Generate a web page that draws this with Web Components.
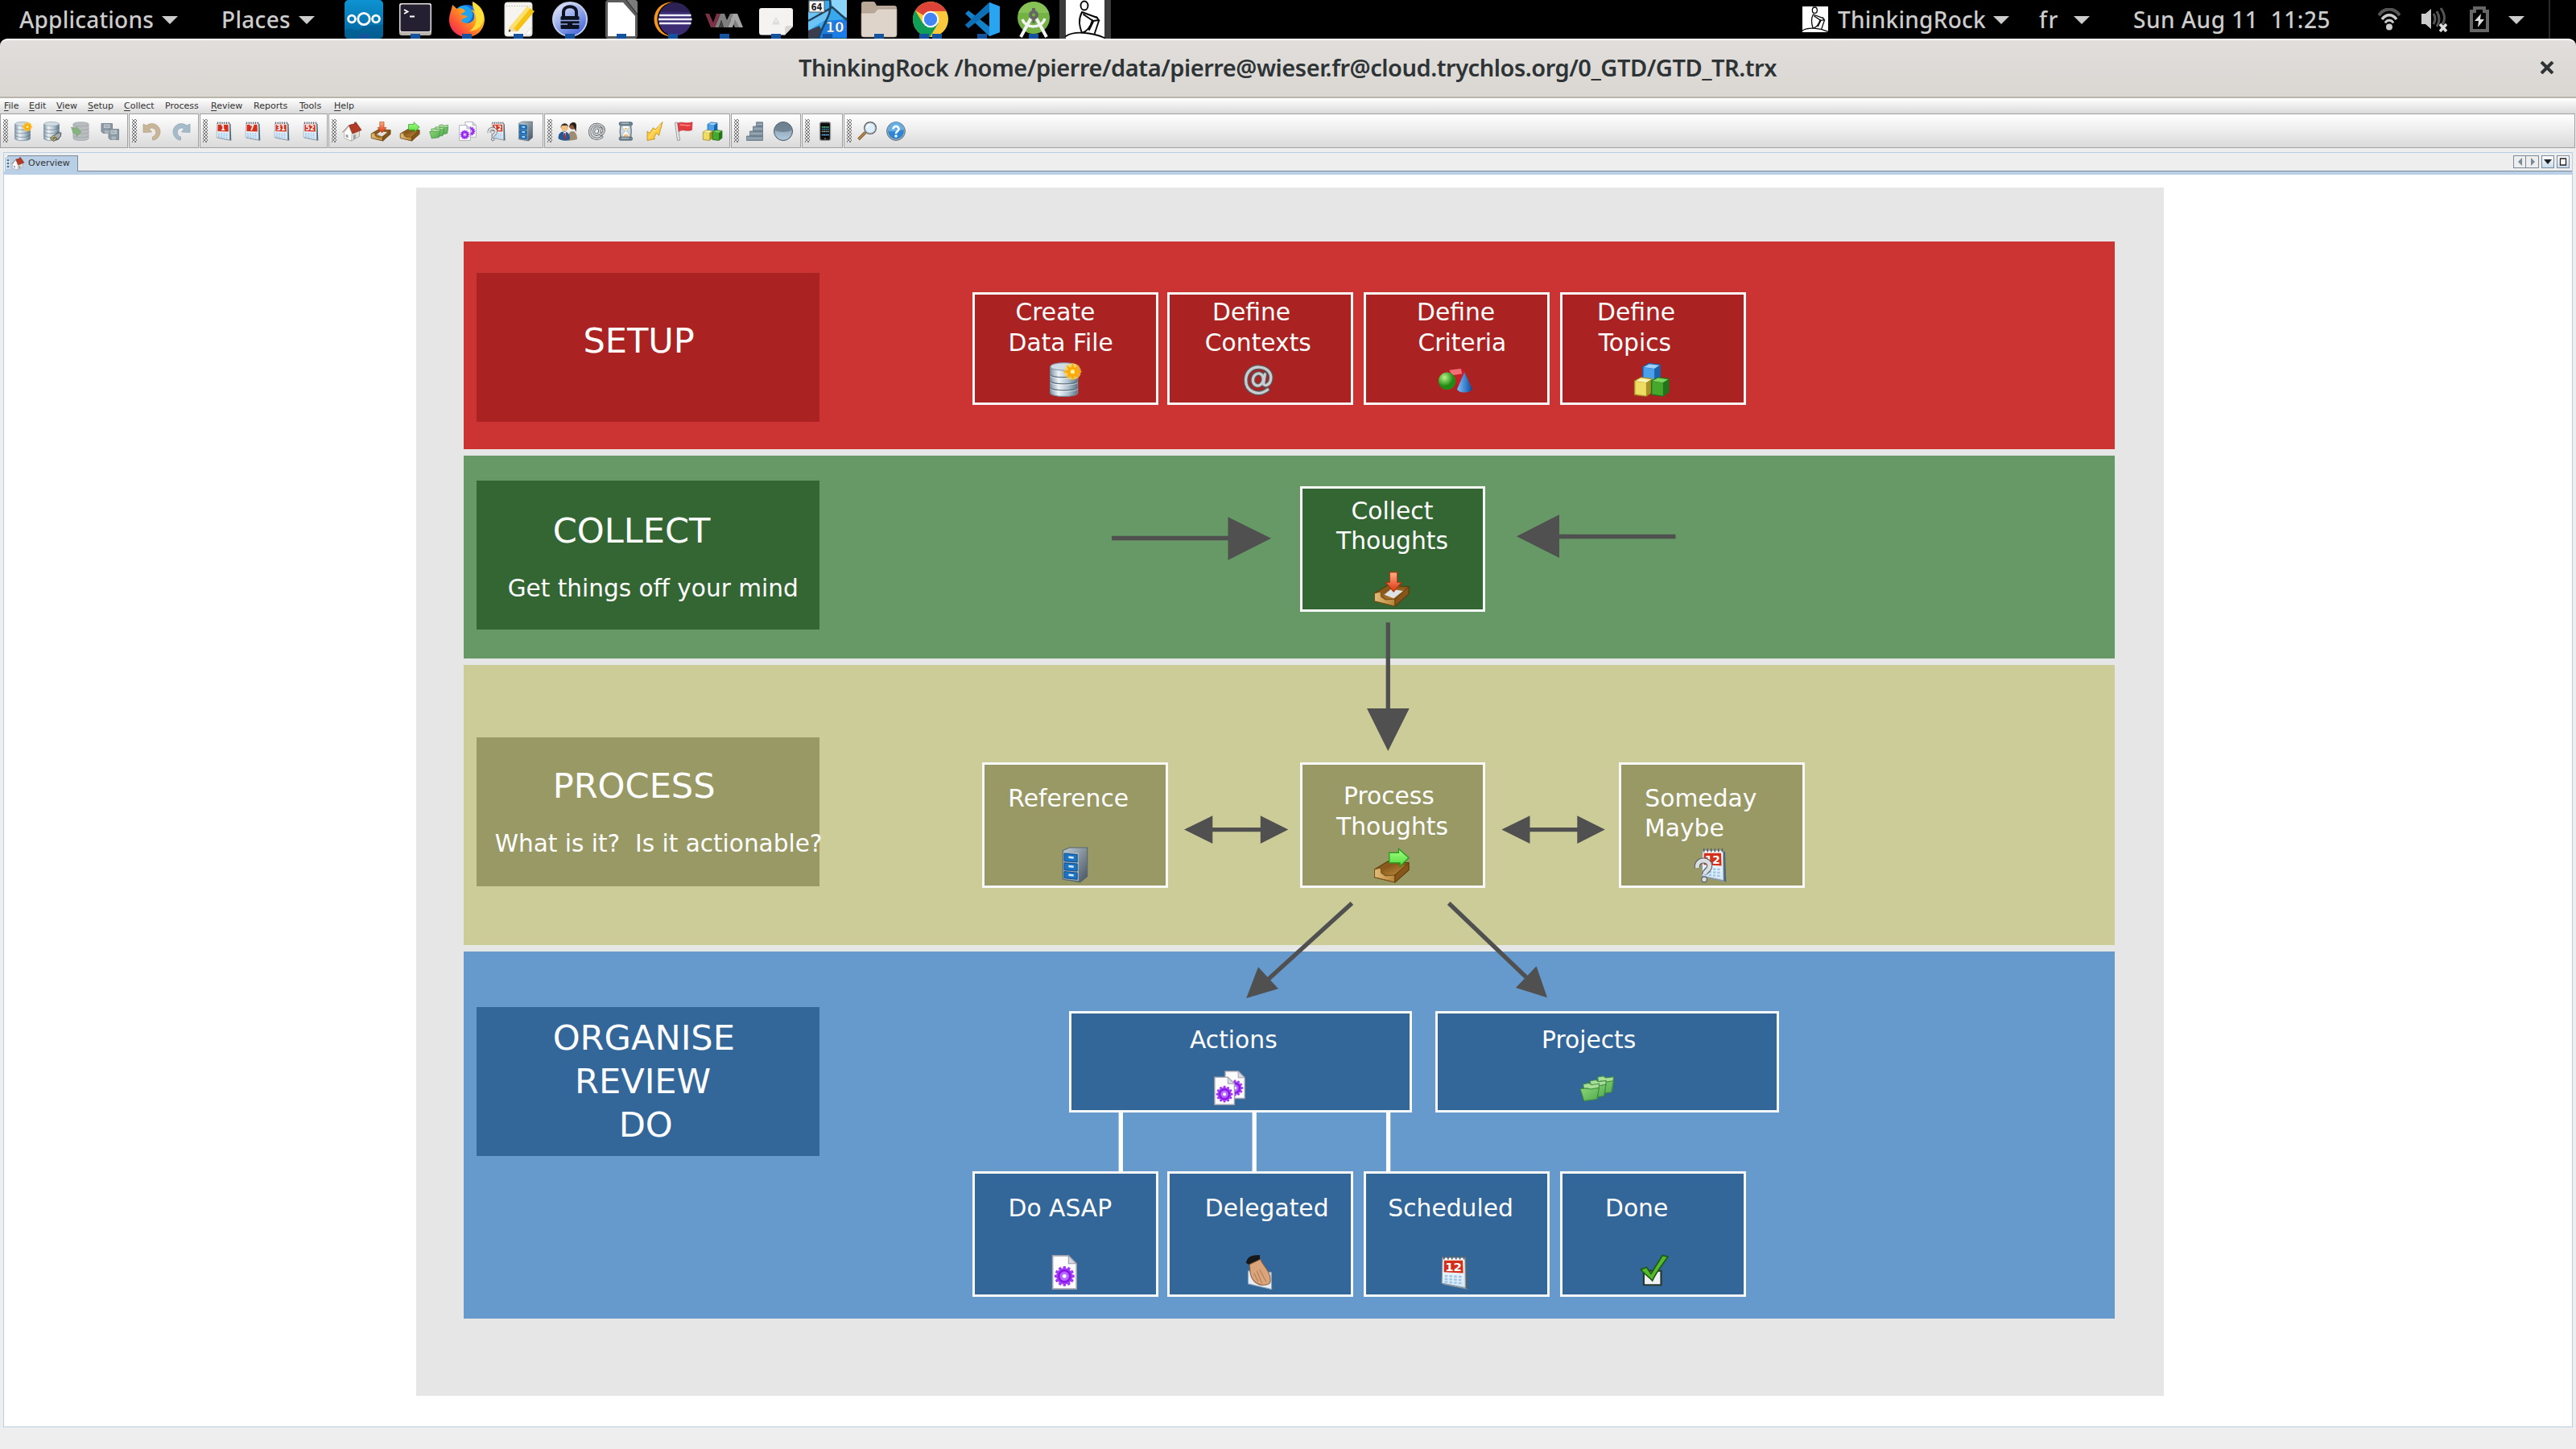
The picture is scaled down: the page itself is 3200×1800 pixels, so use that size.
<!DOCTYPE html>
<html lang="en">
<head>
<meta charset="utf-8">
<title>ThinkingRock</title>
<style>
html,body{margin:0;padding:0;background:#eee}
body{width:3200px;height:1800px;overflow:hidden;font-family:"DejaVu Sans",sans-serif}
</style>
</head>
<body>
<rock-desktop></rock-desktop>
<script>
const GRAD = (id, a, b, x2 = 0, y2 = 1) => `<linearGradient id="${id}" x1="0" y1="0" x2="${x2}" y2="${y2}"><stop offset="0" stop-color="${a}"/><stop offset="1" stop-color="${b}"/></linearGradient>`;

const DB = `<defs><linearGradient id="d"><stop offset="0" stop-color="#8095a5"/><stop offset=".3" stop-color="#eef3f7"/><stop offset=".65" stop-color="#b0c1ce"/><stop offset="1" stop-color="#5a7283"/></linearGradient></defs>
<path d="M1.500 3.200V21c0 3.600 19 3.600 19 0V3.200z" fill="url(#d)" stroke="#74899a" stroke-width=".7"/>
<path d="M1.500 8.500c0 2.600 19 2.600 19 0M1.500 13c0 2.600 19 2.600 19 0M1.500 17.500c0 2.600 19 2.600 19 0" fill="none" stroke="#5d7382" stroke-width=".7"/>
<path d="M1.500 9.300c0 2.600 19 2.600 19 0M1.500 13.800c0 2.600 19 2.600 19 0M1.500 18.300c0 2.600 19 2.600 19 0" fill="none" stroke="#fff" stroke-width=".5" opacity=".6"/>
<ellipse cx="11" cy="3" rx="9.300" ry="2.600" fill="#d0dbe3" stroke="#8498a6" stroke-width=".6"/>`;
const TRAY = `<defs>${GRAD('w', '#74470f', '#c08c3e', 1, 1)}${GRAD('w2', '#e2bd7a', '#b78436', 1, 0)}</defs>
<path d="M.3 15 9.500 9.500 24 10.500 24 15.500 14.500 24 .3 20.500z" fill="#8a5a1a" stroke="#5b390c" stroke-width=".6"/>
<path d="M4 15.800 10.500 11.500 22 12.300 14 18.800 8 18.800z" fill="url(#w)"/>
<path d="M.3 15 4.500 14 5 17.500 8 19.500 14.500 19 14.500 24 .3 20.500z" fill="url(#w2)" stroke="#7a5118" stroke-width=".6"/>
<path d="M14.500 19 24 10.500V15.500L14.500 24z" fill="#86561a" stroke="#5b390c" stroke-width=".5"/>`;
const CAL = (n, s) => `<defs>${GRAD('c', '#ffffff', '#d3e6f5')}</defs>
<path d="M19.500 2 21.500 3 22.300 23.800 19.500 22.500z" fill="#4c6478"/><path d="M4 19.500 19.500 22.500 22.300 24 5.500 20.700z" fill="#8496a3"/><path d="M4.500 1.800H20L20.300 22.700 4 19.500z" fill="url(#c)" stroke="#8c9ba6" stroke-width=".6"/>
<path d="M5.500 3.800H18.500L18.800 12.500 5.400 11.900z" fill="#d3301c"/>
<path d="M5.500 .5v2.500M8.300 .5v2.500M11 .5v2.500M13.800 .5v2.500M16.500 .5v2.500M19.300 .5v2.500" stroke="#5b6064" stroke-width="1"/>
<text x="12" y="11" text-anchor="middle" font-family="DejaVu Sans,sans-serif" font-weight="bold" font-size="${s}" fill="#fff">${n}</text>
<path d="M6 14.500l12 .6M6 16.600l12 .8M6 18.500l12 1.200" stroke="#9cc6e8" stroke-width="1.300" stroke-dasharray="2 1.200"/>`;
const TEETH = Array.from({ length: 12 }, (_, i) => { const p = (a, r) => { const t = (i * 30 + a) * Math.PI / 180; return (8.7 + r * Math.cos(t)).toFixed(2) + ' ' + (14.7 + r * Math.sin(t)).toFixed(2); }; return `${i ? 'L' : 'M'}${p(-12, 5.5)}L${p(-7, 7)}L${p(7, 7)}L${p(12, 5.5)}`; }).join('') + 'z';
const GEARPAGE = (x, y, s) => `<g transform="translate(${x} ${y}) scale(${s})"><path d="M.5.5H11.500L17 6V23.500H.5z" fill="#fdfdff" stroke="#a0a0ac" stroke-width=".9"/><path d="M11.500 .5V6H17z" fill="#d5d8de" stroke="#9c9ca8" stroke-width=".6"/>
<path d="${TEETH}" fill="#a23af8"/><circle cx="8.700" cy="14.700" r="4" fill="none" stroke="#8210e0" stroke-width="1"/><circle cx="8.700" cy="14.700" r="3" fill="#b76cff"/><circle cx="8.700" cy="14.700" r="1.300" fill="#fff"/></g>`;
const FOLDER = (x, y) => `<g transform="translate(${x} ${y})"><path d="M2.500 1.500 6.500 .8 8 2 13.500 1.300 12.500 11 3.500 12z" fill="#a9dd98" stroke="#3f8f45" stroke-width=".6"/><path d="M.4 4.800 5 4.400 7.500 5 13.500 4 12 12 3 13.200z" fill="url(#f)" stroke="#3d8a41" stroke-width=".6"/></g>`;
const CUBE = (x, y, t, l, r) => `<g transform="translate(${x} ${y})"><path d="M0 2.500 4.500 0 12 1 12 10 8 13 0 12z" fill="${r}" stroke="${r}" stroke-width=".7"/><path d="M.5 2.700 8 3.800V12.600L.5 11.600z" fill="${l}"/><path d="M.5 2.500 4.500.4 11.500 1.300 8 3.600z" fill="${t}"/></g>`;
const THINKER = `<rect width="48" height="48" fill="#fff"/><g fill="none" stroke="#050505" stroke-width="1.900" stroke-linecap="round"><ellipse cx="23" cy="7" rx="4.500" ry="5.500"/><path d="M20 15C15 25 17 33 20 41M20 15 39 22M22 18 34 26 41 25 38 21M20 41C27 39 31 32 33 25M29 37 34 27M36 41 41 26M0 45C10 38 32 40 48 47"/></g>`;

const ICONS = {
  dbNew: DB + `<g fill="#ffa800"><circle cx="17" cy="6.500" r="5.800" fill="#ffcf4a" opacity=".75"/><path d="M17 .5l1.200 3.500 3-2-1.300 3.400 4 1.100-4 1.200 1.400 3.300-3-1.900-1.300 3.400-1.300-3.400-3 1.900 1.400-3.300-4-1.200 4-1.100-1.300-3.400 3 2z"/><circle cx="17" cy="6.500" r="1.500" fill="#fff0a8"/></g>`,
  dbLink: DB + `<path d="M12 19 19 14 23 14 22 19 17 23z" fill="#a7adb0" stroke="#4e5558"/><path d="M10 22l4-4M13 24l4-4" stroke="#403c20" stroke-width="2.500"/><path d="M10.500 21.500l3.500-3.500M13.500 23.500l3-3" stroke="#eee27a" stroke-width="1.100"/>`,
  dbBack: `<path d="M2 3V21c0 3.400 19 3.400 19 0V3c0-3-19-3-19 0z" fill="#b9bdc0" stroke="#a3a8ab" stroke-width=".8"/><path d="M2 3.500c0 3 19 3 19 0M2 8.500c0 3 19 3 19 0M2 13c0 3 19 3 19 0M2 17.500c0 3 19 3 19 0" fill="none" stroke="#9da3a7" stroke-width=".8"/><path d="M-.5 7 4 8.500 6 6.500 12 13 6 18.500 6 15.500 2 14.500z" fill="#86b47f" stroke="#73a06d" stroke-width=".6"/>`,
  saveAll: `<g fill="#8b99a4" stroke="#7c8a95"><path d="M1 2.500H14.500V14.500H3L1 12.500z"/><path d="M10 9.500H22.500V22.500H12L10 20.500z"/></g><path d="M4 3.500h7.500v4.500H4zM12.500 10.500h7.500v5h-7.500z" fill="#c3cbd1"/><path d="M5 11h5.500v3.500H5zM13.500 18.500h5.500v4h-5.500z" fill="#abb6be"/><path d="M5 5h5.500M5 6.500h5.500M13.500 12h5M13.500 13.500h5" stroke="#8997a1" stroke-width=".7"/>`,
  undo: `<path d="M1 3 5 5C11 0 21 3 22 12 22 18 18 23 12.500 23V19C16 18 17 15 16.500 12 15.500 8 11 7 8.500 9L11.500 13 1 13.500z" fill="#c9b598" stroke="#b8a487" stroke-width=".8"/>`,
  redo: `<path d="M23 3 19 5C13 0 3 3 2 12 2 18 6 23 11.500 23V19C8 18 7 15 7.500 12 8.500 8 13 7 15.500 9L12.500 13 23 13.500z" fill="#a6bbc9" stroke="#93a9b8" stroke-width=".8"/>`,
  cal1: CAL('1', 8), cal7: CAL('7', 8), cal31: CAL('31', 8), cal52: CAL('52', 8), cal12: CAL('12', 8.3),
  home: `<path d="M3 13 3 20.500 11.500 24 21.500 18.500V10L9 6z" fill="#e4ddd2" stroke="#8b847e" stroke-width=".6"/><path d="M2.500 13.500 8.500 5.500 12 14.500 11.500 24 2.500 20.500z" fill="#fffdf9" stroke="#9a938c" stroke-width=".5"/><path d="M15 .5h3v5h-3z" fill="#8a6a60"/><path d="M8.500 4.500 18 2 24 10.500 13 15z" fill="#b23a26" stroke="#6e2015" stroke-width=".6"/><path d="M8.500 4.500 .5 13.500" stroke="#8d6b60" stroke-width="1"/><path d="M4.500 16l3 .8v3.500l-3-1zM14 17l2.800-1.300v5l-2.800 1.500z" fill="#8f9db0"/>`,
  collect: TRAY + `<path d="M7 16 12 12 20 13.500 13.500 18.500z" fill="#dfe2e5"/><path d="M10.800 .5H16V7.500H19L13.500 14 8 7.500H10.800z" fill="url(#r)" stroke="#a8380c" stroke-width=".6"/><defs>${GRAD('r', '#ffb088', '#d8320f')}</defs>`,
  process: TRAY + `<path d="M10.500 3.500H17V.8L24 7 18 13V10.500H10.500z" fill="url(#g)" stroke="#239a1f" stroke-width=".7"/><defs>${GRAD('g', '#a6ff84', '#4fdc3c')}</defs>`,
  projects: `<defs>${GRAD('f', '#8cd678', '#52ab50', 1, 1)}</defs>` + FOLDER(10.2, 3) + FOLDER(5, 5.6) + FOLDER(.2, 7.800),
  actions: GEARPAGE(8.5, 0, .82) + GEARPAGE(1.2, 4.1, .83),
  action: GEARPAGE(3.2, 0, 1),
  someday: `<g transform="translate(2 0) scale(.92 1)">${CAL('12', 8.3)}</g><path d="M2.500 14C1.500 7.500 11 7.500 11 12.500 11 16 7.500 16 7.500 18.500" fill="none" stroke="#5e6467" stroke-width="4"/><path d="M2.500 14C1.500 7.500 11 7.500 11 12.500 11 16 7.500 16 7.500 18.500" fill="none" stroke="#dbdee0" stroke-width="2.700"/><circle cx="7.300" cy="22" r="1.900" fill="#d5d9db" stroke="#5e6467" stroke-width=".7"/>`,
  reference: `<defs>${GRAD('k', '#c3ced6', '#42525f', 1, 1)}</defs><path d="M3.500 2 8 0H20.500V20L15.500 24 3.500 22z" fill="url(#k)" stroke="#566673" stroke-width=".6"/><path d="M4 2.500 14.500 3.500V23L4 21.500z" fill="#9fb5c4"/><path d="M4.500 4 13.500 4.800V10L4.500 9.300zM4.500 10.500 13.500 11.200V16.200L4.500 15.500zM4.500 16.500 13.500 17.400V22L4.500 21z" fill="#1b74c4" stroke="#0f4680" stroke-width=".5"/><path d="M7.500 6.500l3.500.5M7.500 12.800l3.500.5M7.500 18.800l3.500.5" stroke="#d9ecfb" stroke-width="1.400"/>`,
  people: `<path d="M12 24C12 15 15 12 18 12S24 15 24 22L20 23z" fill="#a08c72"/><circle cx="18.500" cy="5.800" r="4" fill="#8a5a3a"/><path d="M14.500 8C13 0 24-2 23 6L22.500 13 20 7 18 4 15.500 5z" fill="#2e211b"/><path d="M.5 21C.5 14 4 12.500 8 12.500S15 15 15 22C11 25 4 24 .5 21z" fill="#235a96"/><path d="M7 13h3l-1 8z" fill="#fff"/><path d="M8 14h1.300l.5 7-1.300 2-1-2z" fill="#c8201a"/><circle cx="8.300" cy="7.500" r="4.500" fill="#f0bd82"/><path d="M3.700 8C3 1 13 0 13 7L11.500 5 5 5z" fill="#40362f"/>`,
  at: `<g fill="none" stroke-linecap="round"><g stroke="#565b5f" stroke-width="3.300"><path d="M18.800 19C12.500 24 3.500 20.500 3.700 12.200 4 6 8.500 3.200 13 3.400 18.500 3.700 21.700 7.500 21 11.800 20.400 15.800 16.500 17.200 15.900 14.800L16.900 8.300"/><ellipse cx="12.200" cy="12" rx="3.600" ry="4.300" transform="rotate(15 12.200 12)"/></g><g stroke="#c9cdd0" stroke-width="1.900"><path d="M18.800 19C12.500 24 3.500 20.500 3.700 12.200 4 6 8.500 3.200 13 3.400 18.500 3.700 21.700 7.500 21 11.800 20.400 15.800 16.500 17.200 15.900 14.800L16.900 8.300"/><ellipse cx="12.200" cy="12" rx="3.600" ry="4.300" transform="rotate(15 12.200 12)"/></g></g>`,
  hourglass: `<path d="M6 4H18.500V21H6z" fill="#cfd9e0"/><path d="M6 5q-1.500 7 0 15M18.500 5q1.500 7 0 15" fill="none" stroke="#6a8090" stroke-width="1.500"/><path d="M8 5H17C17 9 14.500 10.500 13 12 14.500 13.500 17 15 17 19.500H8C8 15 10.500 13.500 12 12 10.500 10.500 8 9 8 5z" fill="#fff" stroke="#91a3af" stroke-width=".6"/><path d="M10 8h5L12.500 11zM9 19q.5-3.500 3.500-3.500T16 19z" fill="#eec278"/><rect x="4.200" y=".8" width="16.300" height="4" rx="1.500" fill="#708594" stroke="#40525e" stroke-width=".7"/><rect x="4.200" y="19.200" width="16.300" height="4" rx="1.500" fill="#708594" stroke="#40525e" stroke-width=".7"/><path d="M7 2.200h9M7 20.600h9" stroke="#c2d0da" stroke-width="1"/>`,
  bolt: `<path d="M22 .5 17.500 17.500 14.500 14 11 21 13 21.500 3 23.500 3 12 6 14.500 10.500 7.500 13 10z" fill="#ffcb42" stroke="#c08a14" stroke-width=".8"/><path d="M19.500 4 13 12 11.500 11 5.500 20" fill="none" stroke="#ffefa6"/>`,
  flag: `<path d="M1.500 1.500 4.500 1 7.500 23 4.500 23.500z" fill="#e8eaec" stroke="#7f868b" stroke-width=".8"/><path d="M5 2C10-.5 14 3.500 23 .8L22.500 10.500C15 13 11 8.500 6.300 12.500z" fill="#e23c40" stroke="#b3282b" stroke-width=".6"/><path d="M7.500 4.500c4-1.500 7 1.500 13 0" stroke="#f98684" stroke-width="1.600" fill="none"/>`,
  topics: CUBE(6, .8, '#9cd0fa', '#4aa0ea', '#1b63ad') + CUBE(.3, 10.5, '#fdf3b0', '#efdc62', '#a89125') + CUBE(12, 10.5, '#7fd45e', '#46a92e', '#22741a'),
  criteria: `<defs><radialGradient id="q" cx=".35" cy=".3"><stop offset="0" stop-color="#b8f58a"/><stop offset="1" stop-color="#228a14"/></radialGradient>${GRAD('p', '#7cc0ff', '#0a4a9c', 1, 0)}</defs><path d="M8 5.500 16 4.500 19 6 17 16 11 15z" fill="#c41f28"/><path d="M8 5.500 16 4.500 17 8 10 9z" fill="#f07076"/><circle cx="6.500" cy="13" r="6" fill="url(#q)"/><path d="M18.500 7 24 18.500C22 22 14 21.500 13.500 18.500z" fill="url(#p)"/>`,
  stairs: `<g fill="#8496a3" stroke="#637582" stroke-width=".8"><path d="M14.500.8H22.500V6H14.500zM10.500 6H22.500V12H10.500zM6.500 12H22.500V18H6.500zM2.500 18H22.500V23.500H2.500z"/></g><path d="M15 3.500h7M11 9h11M7 15h15M3 20.800h19" stroke="#a5b4be" stroke-width="1"/>`,
  ball: `<defs>${GRAD('b', '#8193a0', '#b0cbe0')}</defs><circle cx="12" cy="12" r="11.500" fill="url(#b)" stroke="#42525e"/><path d="M1.500 11A10.500 10.500 0 0 1 22.500 11Q12 15 1.500 11z" fill="#687b89" opacity=".8"/>`,
  phone: `<rect x="5.500" y=".8" width="13" height="22.500" rx="2" fill="#111" stroke="#999" stroke-width="1.300"/><rect x="7.200" y="4" width="9.800" height="15" fill="#000"/><path d="M7.700 6.800h9" stroke="#4fae83" stroke-width="1.700" stroke-dasharray="2 .4"/><path d="M7.700 9.500h9" stroke="#3d91b9" stroke-width="1.700" stroke-dasharray="2 .4"/><path d="M7.700 12.300h9" stroke="#92a39a" stroke-width="1.700" stroke-dasharray="2 .4"/><path d="M7.700 16.500h9" stroke="#60a4d8" stroke-width="2" stroke-dasharray="2 .4"/><circle cx="12" cy="21.200" r="1" fill="#777"/>`,
  search: `<path d="M10 13.500 1.500 22" stroke="#6b431c" stroke-width="3.600"/><path d="M10 13.500 1.500 22" stroke="#c08a4a" stroke-width="1.800"/><circle cx="16" cy="8" r="7.300" fill="#dcefff" stroke="#5a6064" stroke-width="1.400"/><circle cx="16" cy="8" r="6" fill="none" stroke="#c8ced2"/><path d="M12 8c0-3 2-4.500 5-4.500" stroke="#fff" stroke-width="1.500" fill="none"/>`,
  help: `<circle cx="12" cy="12" r="11.400" fill="#a3afb8" stroke="#5d6c78"/><circle cx="12" cy="12" r="9.800" fill="#2e86d2"/><path d="M2.500 10A9.500 9.500 0 0 1 21.500 10Q12 13 2.500 12z" fill="#63aee8"/><path d="M8.500 9.500C8.500 4.500 16 5 15.500 9.500 15.300 12 12 12 12 15" fill="none" stroke="#fff" stroke-width="2.700"/><circle cx="12" cy="18" r="1.700" fill="#fff"/>`,
  hand: `<path d="M2.500 11 18.500 12 18.800 23.800 2.500 20z" fill="#e6edf5" stroke="#8fa5b8" stroke-width=".6"/><path d="M1 5.500C2 1.500 4 0 10.500 0L11 5 4.500 7.500z" fill="#16181a"/><path d="M3.500 6.500 11 3C12.500 7 16.500 10 17.500 14.500S18 20.500 13.500 20.800 5 18 4 12.500z" fill="#dba57c" stroke="#8f5f3d" stroke-width=".6"/><path d="M10.500 10l4.500 8.500M8.500 11l3.500 8.500M6.500 12.500l3 6" stroke="#b07c56" stroke-width=".6"/>`,
  done: `<path d="M5 11H17V20.800H5z" fill="#eef2f4" stroke="#28382c" stroke-width="1.200"/><path d="M3 10 7 8.500 10 13 18 .3 21.700 1.300C17 8 13 13 11 17.800 8.500 15 5 13 3 10z" fill="#56b82d" stroke="#1c5a10" stroke-width=".9"/>`
};

const APPS = {
  nextcloud: `<defs>${GRAD('n', '#0f93d2', '#00639c')}</defs><rect width="48" height="48" rx="5" fill="url(#n)"/><path d="M0 38C8 32 12 40 20 36 28 28 36 34 48 30V43Q48 48 43 48H5Q0 48 0 43z" fill="#035a8c" opacity=".6"/><g fill="none" stroke="#fff" stroke-width="2.800"><circle cx="24" cy="23.500" r="7.200"/><circle cx="9" cy="23.500" r="4.400"/><circle cx="39" cy="23.500" r="4.400"/></g>`,
  terminal: `<rect x="4" y="4" width="40" height="40" rx="3" fill="#b9b3ae"/><rect x="4" y="4" width="40" height="36" rx="3" fill="#e6e2df"/><rect x="5.500" y="5.500" width="37" height="33.500" rx="2" fill="#241f31"/><path d="M10 12l4.500 2.500-4.500 2.500M17 20.500h6" fill="none" stroke="#fff" stroke-width="1.800"/>`,
  firefox: `<defs><linearGradient id="x" x1="1" y1="0" x2="0" y2="1"><stop offset="0" stop-color="#ffe14a"/><stop offset=".45" stop-color="#ff9a1f"/><stop offset=".75" stop-color="#ff4a3c"/><stop offset="1" stop-color="#d4137e"/></linearGradient></defs><circle cx="24" cy="23" r="17" fill="#1768d6"/><circle cx="20" cy="18" r="11" fill="#1fa3ee"/><path d="M6 6C9 8 10 10 12 11 17 9 20 11 22 14L16 18 25 20C22 23 19 22 17 26 22 31 31 29 33 23 34 17 32 15 29 12 32 12 34 14 35 15 34 9 32 7 31 2 42 7 46 16 46 25 45 38 36 46 24 46S2 37 2 25C2 17 5 13 6 6z" fill="url(#x)"/><path d="M31 2C30 9 34 13 35 20 37 31 31 36 27 39 39 38 45 30 45 20 43 11 37 6 31 2z" fill="#ffe43b" opacity=".9"/>`,
  notes: `<rect x="7" y="3" width="34" height="42" rx="3" fill="#f5f4f0" stroke="#d5d3cf"/><path d="M9 7.500h30" stroke="#aaa" stroke-width="1.200" stroke-dasharray="1.200 2"/><path d="M32 43 40 34V43z" fill="#fff" stroke="#ddd"/><path d="M35 8 44 14 23 39 12 38 13 34z" fill="#f5c211"/><path d="M35 8 39 10 17 37 12 35z" fill="#fbe070"/><path d="M14 33 22 38 12 39z" fill="#ead8b5"/><path d="M13 36 14.500 39 11.500 39.500z" fill="#222"/>`,
  keepass: `<defs>${GRAD('e', '#f2f5ff', '#4667d8', .7, 1)}</defs><circle cx="24" cy="24" r="21" fill="url(#e)" stroke="#c4d0ea" stroke-width="2"/><path d="M16 21V15C16 6 32 6 32 15V21" fill="none" stroke="#0c1220" stroke-width="4"/><rect x="12.500" y="20" width="23" height="16" rx="1.500" fill="#0c1220"/><path d="M12 25.500h24M12 30h9M27 30h9" stroke="#98aae6" stroke-width="1.300"/>`,
  office: `<rect x="4" y="0" width="40" height="48" rx="4" fill="#5c5c5c"/><path d="M7 3H26L41 20V45H7z" fill="#fff"/><path d="M30 0H40Q44 0 44 4V18z" fill="#7b7b7b"/><path d="M30 0 44 18" stroke="#222"/>`,
  eclipse: `<circle cx="22" cy="24" r="21.500" fill="#f7941e"/><circle cx="26" cy="24" r="21.500" fill="#000"/><circle cx="26.500" cy="24" r="20.500" fill="#3a2b73"/><path d="M8 14C17-1 38 0 45 15z" fill="#2c2255"/><path d="M7 19h39.500M6 24h41.500M7 29h39.500" stroke="#eef" stroke-width="2.600"/>`,
  vm: `<g stroke="none"><path d="M0 17H5L10 28 14 17H19L12 34H7z" fill="#7d3147"/><path d="M12 34 19 17H24L27 25 31 17H35L42 34H37L32 24 28 34H23L20 25 17 34z" fill="#7f7f7f"/><path d="M28 34 35 17H40L47 34H42L37 24 34 34z" fill="#a5a5a5"/><path d="M17 34 20 25 23 34z" fill="#444"/></g>`,
  paper: `<path d="M6 10H42Q45 10 45 13V33L35 43.500H6Q3 43.500 3 40V13Q3 10 6 10z" fill="#f4f3f1"/><path d="M45 32H38Q35 32 35 36V43.500z" fill="#d8d7d3"/><path d="M24 21 29 30.500H19z" fill="#dcdbd8"/><path d="M24 24.500v3.500" stroke="#fff"/>`,
  map: `<rect width="47" height="47" x=".5" y=".5" fill="#38a9ee"/><path d="M0 14H27L22 24 0 38z" fill="#6bc4f5"/><path d="M28 0H48V22L31 12z" fill="#8bd5fb"/><path d="M0 38 14 32 20 47H0z" fill="#3b3d4c"/><path d="M20 26 48 24V47H14z" fill="#1b7de8"/><path d="M27 0C30 20 20 25 13 47M0 26 30 9 48 25" stroke="#23435c" stroke-width="2.500" fill="none"/><rect x="1" y="1" width="19" height="14" fill="#fff" stroke="#555"/><text x="10.500" y="12.500" font-family="DejaVu Sans,sans-serif" font-size="12" text-anchor="middle" fill="#222" font-weight="bold" textLength="14" lengthAdjust="spacingAndGlyphs">64</text><text x="33" y="40" font-family="DejaVu Sans,sans-serif" font-size="17" font-weight="bold" text-anchor="middle" fill="#fff" stroke="#1b4a80" stroke-width=".5" textLength="23" lengthAdjust="spacingAndGlyphs">10</text>`,
  files: `<path d="M2 5Q2 2 5 2H17Q19 2 20 5L21 7H43Q46 7 46 10V43Q46 46 43 46H5Q2 46 2 43z" fill="#b9a798"/><path d="M2 16H17Q19 16 20 14 21 11 24 11H46V43Q46 46 43 46H5Q2 46 2 43z" fill="#dfd4ca" stroke="#a89788" stroke-width=".7"/>`,
  chrome: `<circle cx="24" cy="24" r="22" fill="#fbc93b"/><path d="M24 24 5 13A22 22 0 0 1 43.500 14H24z" fill="#dd4437"/><path d="M5 13A22 22 0 0 0 23 46L33.500 29 24 24 14.500 29z" fill="#109d58"/><circle cx="24" cy="24" r="10.300" fill="#fff"/><circle cx="24" cy="24" r="8.200" fill="#4286f5"/>`,
  code: `<path d="M33 3 46 8V40L33 45 3 17 7 13 33 33z" fill="#1380c8"/><path d="M33 3 7 35 3 31z" fill="#0a66a8"/><path d="M3 31 7 35 33 15V3L16 19z" fill="#0f6fb4"/><path d="M33 3 46 8V40L33 45z" fill="#28a4f0"/><path d="M33 15V33L22 24z" fill="#000"/>`,
  studio: `<circle cx="24" cy="22" r="20" fill="#74b244"/><path d="M5 16A20 20 0 0 1 43 16z" fill="#86c255"/><path d="M21 22 8 46M27 22 40 46" stroke="#f3f3f3" stroke-width="4"/><path d="M10 24C14 36 34 36 38 23" stroke="#f3f3f3" stroke-width="3.500" fill="none"/><circle cx="24" cy="18.500" r="4" fill="none" stroke="#666" stroke-width="4"/><path d="M22 10h4v4h-4z" fill="#666"/><path d="M24 24v5" stroke="#666" stroke-width="3"/>`,
  thinker: THINKER
};

const define = (name, render) => customElements.define(name, class extends HTMLElement {
  connectedCallback() {
    if (!this.shadowRoot) this.attachShadow({ mode: 'open' }).innerHTML = render(this);
  }
});

define('rock-icon', el => {
  const big = el.getAttribute('set') === 'app', n = el.getAttribute('name'), s = el.getAttribute('size') || 24;
  return `<style>:host{display:block;flex:none;width:${s}px;height:${s}px}svg{display:block;overflow:visible}</style><svg width="${s}" height="${s}" viewBox="0 0 ${big ? '48 48' : '24 24'}">${(big ? APPS : ICONS)[n]}</svg>`;
});

/* Text spaced out to span an exact width, whatever the font's own advances. */
customElements.define('span-text', class extends HTMLElement {
  connectedCallback() {
    this.attachShadow({ mode: 'open' }).innerHTML = `<style>:host{display:inline-block;white-space:pre;flex:none}</style><span><slot></slot></span>`;
    const s = this.shadowRoot.querySelector('span'), w = +this.getAttribute('w');
    const d = (w - s.getBoundingClientRect().width) / this.textContent.length;
    s.style.letterSpacing = d + 'px';
    this.style.width = w + 'px';
  }
});

define('caret-down', () => `<style>:host{display:block;flex:none;width:0;height:0;border:10px solid transparent;border-top-color:#ccc;border-bottom:0}</style>`);

define('task-button', el => {
  const n = +(el.getAttribute('windows') ?? 1), active = el.hasAttribute('active');
  return `<style>:host{display:grid;width:64px;height:48px;place-items:center;background:${active ? '#3c3c3c' : 'none'}}rock-icon,.m{grid-area:1/1}.m{align-self:end;display:flex;gap:4px}.m i{width:12px;height:6px;background:#15539e}</style><rock-icon set="app" name="${el.getAttribute('app')}" size="48"></rock-icon><div class="m">${'<i></i>'.repeat(n)}</div>`;
});

define('top-bar', () => `<style>
:host{display:flex;align-items:center;height:48px;background:#000;color:#ccc;font:500 28px/48px "Noto Sans","Open Sans",sans-serif}
.l,.r{display:flex;align-items:center;height:48px}.l{padding-left:24px}.r{margin-left:auto}
.l caret-down,.r caret-down{margin-top:2px}.sep{width:2px;height:48px;background:#2b2b2b;margin:0 32px 0 30px}svg{display:block}
</style>
<div class="l"><span-text w="167">Applications</span-text><caret-down style="margin-left:10px"></caret-down>
<span-text w="86" style="margin-left:54px">Places</span-text><caret-down style="margin:2px 29px 0 10px"></caret-down>
${['nextcloud', 'terminal', 'firefox', 'notes', 'keepass', 'office', 'eclipse', 'vm', 'paper', 'map', 'files', 'chrome', 'code', 'studio'].map(a => `<task-button app="${a}" windows="${a === 'chrome' ? 2 : 1}"></task-button>`).join('')}<task-button app="thinker" active windows="0"></task-button></div>
<div class="r"><rock-icon set="app" name="thinker" size="32"></rock-icon><span-text w="184" style="margin-left:12px">ThinkingRock</span-text><caret-down style="margin-left:9px"></caret-down>
<span-text w="25" style="margin-left:37px">fr</span-text><caret-down style="margin-left:18px"></caret-down>
<span-text w="245" style="margin-left:54px">Sun Aug 11  11:25</span-text>
<svg width="28" height="28" viewBox="0 0 28 28" style="margin-left:59px"><path d="M1 9C8-1 20-1 27 9" fill="none" stroke="#555" stroke-width="4"/><path d="M5 14C10 7 18 7 23 14" fill="none" stroke="#ccc" stroke-width="3.500"/><path d="M9 18.500C11 14 17 14 19 18.500" fill="none" stroke="#ccc" stroke-width="3"/><circle cx="14" cy="23.500" r="4" fill="#ccc"/></svg>
<svg width="33" height="32" viewBox="0 0 33 32" style="margin-left:26px"><path d="M0 9H5L12 3V28L5 22H0z" fill="#ccc"/><path d="M15 9q4 6 0 13M19 6q6 10 0 19M24 2q8 12 2 20" fill="none" stroke="#555" stroke-width="3"/><path d="M23 22l8 9M31 22l-8 9" stroke="#ddd" stroke-width="3.500"/></svg>
<svg width="24" height="32" viewBox="0 0 24 32" style="margin-left:27px"><path d="M2 6H6V2H18V6H22V30H2z" fill="none" stroke="#666" stroke-width="4"/><path d="M14 9 6 18H11L10 26 18 16H13z" fill="#ddd"/></svg>
<caret-down style="margin-left:24px"></caret-down><div class="sep"></div></div>`);

define('window-title', () => `<style>
:host{display:block;height:74px;background:#000}
.t{display:grid;grid-template-columns:1fr auto 1fr;align-items:center;height:68px;border-top:2px solid #fff;border-bottom:2px solid #bab5ab;padding-bottom:2px;background:linear-gradient(#e1dedb,#dad6d2);border-radius:9px 9px 0 0;color:#2e3436;font:600 29px/68px "Noto Sans","Open Sans",sans-serif}
span-text{grid-column:2;padding-right:1px}svg{justify-self:end;margin-right:27px}
</style><div class="t"><span-text w="1215">ThinkingRock /home/pierre/data/pierre@wieser.fr@cloud.trychlos.org/0_GTD/GTD_TR.trx</span-text><svg width="18" height="16" viewBox="0 0 18 16"><path d="M2 1 16 15M16 1 2 15" stroke="#2e3436" stroke-width="4"/></svg></div>`);

define('menu-bar', () => {
  const items = [['F', 'ile', 31], ['E', 'dit', 34], ['V', 'iew', 39], ['S', 'etup', 45], ['C', 'ollect', 51], ['', 'Process', 57], ['R', 'eview', 53], ['', 'Reports', 57], ['T', 'ools', 43], ['H', 'elp', 40]];
  return `<style>:host{box-sizing:border-box;display:flex;height:19px;padding:1px 0 0 5px;background:linear-gradient(#fff,#dadada);color:#333;font:11px/18px "DejaVu Sans",sans-serif}span{flex:none}u{text-underline-offset:1.500px;text-decoration-thickness:1px}</style>` +
    items.map(([m, t, w]) => `<span style="width:${w}px">${m ? `<u>${m}</u>` : ''}${t}</span>`).join('');
});

define('tool-bar', () => {
  const groups = [['dbNew', 'dbLink', 'dbBack', 'saveAll'], ['undo', 'redo'], ['cal1', 'cal7', 'cal31', 'cal52'], ['home', 'collect', 'process', 'projects', 'actions', 'someday', 'reference'], ['people', 'at', 'hourglass', 'bolt', 'flag', 'topics'], ['stairs', 'ball'], ['phone'], ['search', 'help']];
  return `<style>:host{display:flex;gap:1px;height:43px;padding-right:1px}
  .g{box-sizing:border-box;display:flex;align-items:center;gap:12px;height:43px;padding:0 9px 0 3px;border:1px solid #a0a0a0;background:linear-gradient(#fff,#dadada)}
  .g:last-child{flex:1}.d{width:6px;height:29px;margin-right:-5px;background:radial-gradient(circle,#777 .7px,transparent .9px) 0 0/4px 4px,radial-gradient(circle,#777 .7px,transparent .9px) 2px 2px/4px 4px}</style>` +
    groups.map(g => `<div class="g"><div class="d"></div>${g.map(n => `<rock-icon name="${n}"></rock-icon>`).join('')}</div>`).join('');
});

define('tab-strip', () => `<style>
:host{display:flex;height:23px;margin:5px 4px 0;border:1px solid #b8cfe5;border-bottom:0;background:#eee}
.tab{box-sizing:border-box;display:flex;align-items:center;width:92px;height:20px;margin-top:3px;padding-left:2px;background:#b8cfe5;border:1px solid #7a8a99;border-bottom:0;border-left-color:#fff;color:#333;font:11px/18px "DejaVu Sans",sans-serif;clip-path:polygon(5px 0,100% 0,100% 100%,0 100%,0 5px)}
.d{width:4px;height:13px;margin-right:2px;background:radial-gradient(circle,#567 .7px,transparent .9px) 0 0/4px 4px,radial-gradient(circle,#fff .7px,transparent .9px) 2px 2px/4px 4px}
.tab rock-icon,.tab span{margin-top:-2px}.tab span{margin-left:5px}.rest{flex:1;display:flex;justify-content:flex-end;border-bottom:1px solid #7a8a99;padding:3px 3px 0 0}
.b{box-sizing:border-box;width:16px;height:16px;border:1px solid #7a8a99;background:linear-gradient(#fff,#c8dced);display:grid;place-items:center;margin-left:3px}.p{margin:0;background:#eee}.p+.p{border-left:0}svg{display:block}
</style><div class="tab"><div class="d"></div><rock-icon name="home" size="16"></rock-icon><span>Overview</span></div>
<div class="rest"><div class="b p"><svg width="10" height="12"><path d="M8 1v10L3 6z" fill="#7a8a99"/></svg></div><div class="b p"><svg width="10" height="12"><path d="M3 1v10l5-5z" fill="#7a8a99"/></svg></div><div class="b"><svg width="10" height="8"><path d="M0 1h10L5 7z" fill="#222"/></svg></div><div class="b"><svg width="10" height="10"><path d="M1.500 1h7v8h-7z" fill="#fff" stroke="#222" stroke-width="1.300"/></svg></div></div>`);

/* A coloured stage of the workflow, holding its caption box. */
define('stage-band', el => {
  const a = k => el.getAttribute(k);
  return `<style>:host{display:block;box-sizing:border-box;height:${a('h')}px;background:${a('bg')};padding:${a('top')}px 0 0 16px}
  .c{box-sizing:border-box;width:425.500px;height:185px;background:${a('fg')};padding-top:${a('pad')}px;color:#fff;white-space:pre;font:43.100px/53.700px "DejaVu Sans",sans-serif}</style><div class="c"><slot></slot></div>`;
});
define('caption-line', el => `<style>:host{display:block;padding-left:${+el.getAttribute('x') - 591.6}px;${el.hasAttribute('sub') ? 'font-size:29.550px;line-height:37.500px;margin-top:26.700px' : ''}}</style><slot></slot>`);

/* A framed step on the diagram: x/y/w/h in screen units, its lines of text and its icon. */
define('flow-node', el => {
  const [x, y, w, h] = el.getAttribute('box').split(' ').map(Number);
  const [ix, iy] = el.getAttribute('at').split(' ').map(Number);
  const base = +el.getAttribute('base');
  const lines = el.getAttribute('text').split('|').map(l => l.split(':'));
  return `<style>:host{position:absolute;left:${x - 517}px;top:${y - 233}px;width:${w}px;height:${h}px;box-sizing:border-box;border:3px solid #f8f8f8;background:${el.getAttribute('bg')};color:#fff;font:29.750px/37.500px "DejaVu Sans",sans-serif;white-space:pre}
  .t{padding-top:${base - 29.1 - y - 3}px}rock-icon{position:absolute;left:${ix - x - 3}px;top:${iy - y - 3}px}</style><div class="t">${lines.map(([lx, t]) => `<div style="padding-left:${lx - x - 3}px">${t}</div>`).join('')}</div><rock-icon name="${el.getAttribute('icon')}" size="43"></rock-icon>`;
});

define('flow-arrows', () => `<style>:host{position:absolute;inset:0}svg{display:block}</style><svg width="2171" height="1501" viewBox="517 233 2171 1501">
<g stroke="#505050" stroke-width="5.300"><path d="M1381 668.500H1526M1937 666.500H2081.500M1724.300 773.300V881M1506 1030.600H1566M1900 1030.600H1960M1679.400 1122 1576 1216M1799.700 1122 1896 1214"/></g>
<g fill="#505050"><path d="M1525.500 642.300 1579 668.700 1525.500 695.700zM1937 639.300 1884 666.300 1937 693zM1698 880H1750.700L1724.300 933zM1506.300 1013.300V1048L1471 1030.600zM1565.800 1013.300V1048L1600.300 1030.600zM1900.500 1013.300V1048L1865.300 1030.600zM1959.300 1013.300V1048L1993.800 1030.600zM1548.200 1240 1563 1201.300 1588 1228.300zM1922 1239.300 1908.600 1200.300 1883 1227z"/></g>
<path d="M1392.300 1381V1456M1558.200 1381V1456M1724.600 1381V1456" stroke="#fff" stroke-width="5.300"/></svg>`);

define('workflow-map', () => {
  const R = '#aa2222', G = '#336633', T = '#999966', B = '#336699';
  const nodes = [
    ['1208 363 231 140', R, '1261.5:Create|1252.5:Data File', 398.3, 'dbNew', '1302 450'],
    ['1450 363 231 140', R, '1506:Define|1496.8:Contexts', 398.3, 'at', '1541 450'],
    ['1694 363 231 140', R, '1760:Define|1761.4:Criteria', 398.3, 'criteria', '1786 450'],
    ['1938 363 231 140', R, '1984:Define|1985.7:Topics', 398.3, 'topics', '2030 450'],
    ['1615 604 230 156', G, '1678.5:Collect|1660:Thoughts', 645, 'collect', '1707 710'],
    ['1220 947 231 156', T, '1252.3:Reference', 1002, 'reference', '1314 1053'],
    ['1615 947 230 156', T, '1669:Process|1660:Thoughts', 999.4, 'process', '1707 1053'],
    ['2011 947 231 156', T, '2043.3:Someday|2043:Maybe', 1002, 'someday', '2104 1053'],
    ['1328 1256 426 126', B, '1478:Actions', 1302, 'actions', '1506 1330'],
    ['1783 1256 427 126', B, '1915:Projects', 1302, 'projects', '1962 1330'],
    ['1208 1455 231 156', B, '1252.5:Do ASAP', 1511, 'action', '1301 1559'],
    ['1450 1455 231 156', B, '1496.8:Delegated', 1511, 'hand', '1546 1559'],
    ['1694 1455 231 156', B, '1724.3:Scheduled', 1511, 'cal12', '1784 1559'],
    ['1938 1455 231 156', B, '1994:Done', 1511, 'done', '2033 1559']];
  return `<style>:host{display:flex;flex-direction:column;position:relative;box-sizing:border-box;width:2171px;height:1501px;padding:67px 61.500px 0 59px;background:#e6e6e6}</style>
<stage-band h="257.5" bg="#cc3333" fg="${R}" top="39" pad="58" style="margin-bottom:8px"><caption-line x="724">SETUP</caption-line></stage-band>
<stage-band h="252" bg="#669966" fg="${G}" top="31.5" pad="36" style="margin-bottom:8.500px"><caption-line x="686.3">COLLECT</caption-line><caption-line x="630.3" sub>Get things off your mind</caption-line></stage-band>
<stage-band h="348" bg="#cccc99" fg="${T}" top="90" pad="33.8" style="margin-bottom:8px"><caption-line x="686.3">PROCESS</caption-line><caption-line x="614.3" sub>What is it?  Is it actionable?</caption-line></stage-band>
<stage-band h="456" bg="#6699cc" fg="${B}" top="68.5" pad="12.8"><caption-line x="686.3">ORGANISE</caption-line><caption-line x="713.6">REVIEW</caption-line><caption-line x="768.3">DO</caption-line></stage-band>
<flow-arrows></flow-arrows>` + nodes.map(n => `<flow-node box="${n[0]}" bg="${n[1]}" text="${n[2]}" base="${n[3]}" icon="${n[4]}" at="${n[5]}"></flow-node>`).join('');
});

define('rock-desktop', () => `<style>:host{display:flex;flex-direction:column;width:3200px;height:1800px;background:#eee}
.pane{box-sizing:border-box;height:1560px;margin:0 4px;border:1px solid #b8cfe5;border-top:4px solid #b8cfe5;background:#fff;padding:16px 0 0 512px}
</style>
<top-bar></top-bar><window-title></window-title><menu-bar></menu-bar><tool-bar></tool-bar><tab-strip></tab-strip><div class="pane"><workflow-map></workflow-map></div>`);
</script>
</body>
</html>
